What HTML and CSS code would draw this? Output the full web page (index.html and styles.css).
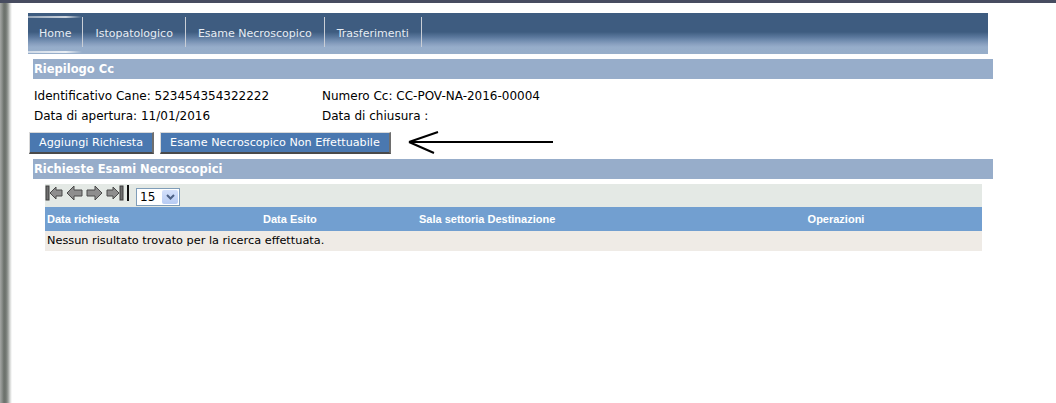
FILE: index.html
```html
<!DOCTYPE html>
<html lang="it">
<head>
<meta charset="utf-8">
<title>Riepilogo Cc</title>
<link rel="stylesheet" href="styles.css">
</head>
<body>
<div class="topbar"></div>
<div class="window">
  <div class="edge"></div>
  <main class="main">
    <nav class="nav">
      <a class="nav-item nav-item-active">Home</a><span class="nav-sep"></span>
      <a class="nav-item">Istopatologico</a><span class="nav-sep"></span>
      <a class="nav-item">Esame Necroscopico</a><span class="nav-sep"></span>
      <a class="nav-item">Trasferimenti</a><span class="nav-sep"></span>
    </nav>

    <h2 class="section-title">Riepilogo Cc</h2>
    <div class="info">
      <span class="info-cell">Identificativo Cane: 523454354322222</span>
      <span class="info-cell">Numero Cc: CC-POV-NA-2016-00004</span>
      <span class="info-cell">Data di apertura: 11/01/2016</span>
      <span class="info-cell">Data di chiusura :</span>
    </div>

    <div class="actions">
      <button class="btn">Aggiungi Richiesta</button>
      <button class="btn">Esame Necroscopico Non Effettuabile</button>
      <svg class="pointer-arrow" width="146" height="24" viewBox="0 0 146 24">
        <path d="M1 11 L145 11 M1 11 L30 1 M1 11 L26 22" stroke="#000" stroke-width="2" fill="none"/>
      </svg>
    </div>

    <h2 class="section-title">Richieste Esami Necroscopici</h2>
    <div class="grid-table">
      <div class="pager">
        <svg class="pager-icon" width="18" height="16" viewBox="0 0 18 16">
          <rect x="1" y="1" width="3" height="14" fill="#6f6f6f" stroke="#3c3c3c" stroke-width="1"/>
          <path d="M5 8 L11 2 L11 5 L17 5 L17 11 L11 11 L11 14 Z" fill="#8e8e8e" stroke="#4a4a4a" stroke-width="1"/>
        </svg>
        <svg class="pager-icon" width="17" height="16" viewBox="0 0 17 16">
          <path d="M1 8 L8 1 L8 5 L16 5 L16 11 L8 11 L8 15 Z" fill="#8e8e8e" stroke="#4a4a4a" stroke-width="1"/>
        </svg>
        <svg class="pager-icon" width="17" height="16" viewBox="0 0 17 16">
          <path d="M16 8 L9 1 L9 5 L1 5 L1 11 L9 11 L9 15 Z" fill="#8e8e8e" stroke="#4a4a4a" stroke-width="1"/>
        </svg>
        <svg class="pager-icon" width="18" height="16" viewBox="0 0 18 16">
          <path d="M13 8 L7 2 L7 5 L1 5 L1 11 L7 11 L7 14 Z" fill="#8e8e8e" stroke="#4a4a4a" stroke-width="1"/>
          <rect x="14" y="1" width="3" height="14" fill="#6f6f6f" stroke="#3c3c3c" stroke-width="1"/>
        </svg>
        <span class="pager-bar"></span>
        <div class="select">
          <span class="select-value">15</span>
          <span class="select-button">
            <svg width="9" height="6" viewBox="0 0 9 6"><path d="M1 1 L4.5 4.5 L8 1" stroke="#4d6185" stroke-width="2" fill="none"/></svg>
          </span>
        </div>
      </div>
      <div class="thead">
        <span class="th">Data richiesta</span>
        <span class="th">Data Esito</span>
        <span class="th">Sala settoria Destinazione</span>
        <span class="th th-center">Operazioni</span>
      </div>
      <div class="empty-row">Nessun risultato trovato per la ricerca effettuata.</div>
    </div>
  </main>
</div>
</body>
</html>
```

FILE: styles.css
```css
html, body {
  margin: 0;
  padding: 0;
  background: #ffffff;
}

body {
  font-family: "DejaVu Sans", Verdana, sans-serif;
  color: #000;
}

.topbar {
  height: 3px;
  background: #474c60;
}

.window {
  display: flex;
  min-height: 400px;
}

.edge {
  width: 12px;
  flex: none;
  background: linear-gradient(to right, #a4a6a4 0, #8a8e8a 2px, #6c716c 4px, #737873 6px, #9a9e9a 8px, #d6d8d6 10px, #ffffff 12px);
}

.main {
  flex: 1;
  padding-left: 16px;
}

/* navigation */
.nav {
  margin-top: 10px;
  width: 960px;
  height: 41px;
  display: flex;
  background: linear-gradient(to bottom,
    #3e5c80 0, #3e5c80 19px,
    #4a688c 21px, #5a779c 24px, #7590b2 28px,
    #889fbf 31px, #96adca 34px, #97aeca 41px);
}

.nav-item {
  display: flex;
  align-items: center;
  padding: 0 12px;
  font-size: 11px;
  color: #e6ecf3;
  text-decoration: none;
  white-space: nowrap;
}

.nav-item-active {
  padding: 0 11px;
  background:
    linear-gradient(to right, rgba(255,255,255,0.45), rgba(255,255,255,0.75) 70%, rgba(255,255,255,0)) no-repeat 0 3px / 100% 2px,
    linear-gradient(to right, rgba(255,255,255,0.55), rgba(255,255,255,0.8) 70%, rgba(255,255,255,0)) no-repeat 0 38px / 100% 2px;
}

.nav-sep {
  width: 1px;
  height: 30px;
  margin-top: 4px;
  background: #c9ced6;
}

/* section titles */
.section-title {
  margin: 5px 0 0 5px;
  width: 959px;
  height: 20px;
  padding-left: 1px;
  background: #97adca;
  color: #ffffff;
  font-size: 11.5px;
  font-weight: bold;
  line-height: 20px;
}

/* info block */
.info {
  margin: 7px 0 0 6px;
  display: grid;
  grid-template-columns: 288px auto;
  font-size: 12px;
  line-height: 20px;
}

.info-cell {
  white-space: nowrap;
}

/* action buttons */
.actions {
  margin: 6px 0 0 1px;
  height: 22px;
  display: flex;
  align-items: center;
  gap: 6px;
}

.btn {
  height: 22px;
  padding: 0 9px 0 9px;
  background: #4a78b0;
  color: #ffffff;
  font-family: "DejaVu Sans", Verdana, sans-serif;
  font-size: 11.2px;
  border-style: solid;
  border-width: 1px 2px 2px 1px;
  border-color: #d8d8d8 #6e6e6e #4a4a4a #d8d8d8;
  border-radius: 0;
  white-space: nowrap;
  cursor: pointer;
}

.pointer-arrow {
  margin: -1px 0 -1px 11px;
  flex: none;
}

/* table */
.grid-table {
  margin: 5px 0 0 17px;
  width: 937px;
}

.pager {
  height: 23px;
  background: #e4e9e5;
  display: flex;
  align-items: center;
  gap: 3px;
}

.pager-icon {
  flex: none;
  margin-top: -6px;
}

.pager-bar {
  width: 2px;
  height: 16px;
  background: #111;
  margin: -5px 4px 0 0;
}

.select {
  width: 44px;
  height: 18px;
  box-sizing: border-box;
  border: 1px solid #7f9db9;
  background: #fff;
  display: flex;
  align-items: center;
  margin-top: 2px;
}

.select-value {
  font-size: 12px;
  padding-left: 3px;
  flex: 1;
}

.select-button {
  width: 16px;
  height: 14px;
  margin-right: 1px;
  border-radius: 2px;
  background: linear-gradient(to bottom, #d4e0fb, #b7cbf3);
  display: flex;
  align-items: center;
  justify-content: center;
}

.thead {
  height: 24px;
  background: #729fd0;
  display: grid;
  grid-template-columns: 216px 156px 273px 1fr;
  align-items: center;
}

.th {
  padding-left: 2px;
  font-family: "Liberation Sans", Arial, sans-serif;
  font-weight: bold;
  font-size: 11px;
  color: #ffffff;
  white-space: nowrap;
}

.th-center {
  text-align: center;
  padding-left: 0;
}

.empty-row {
  height: 20px;
  line-height: 20px;
  padding-left: 2px;
  background: #efebe6;
  font-size: 11.3px;
}
```
